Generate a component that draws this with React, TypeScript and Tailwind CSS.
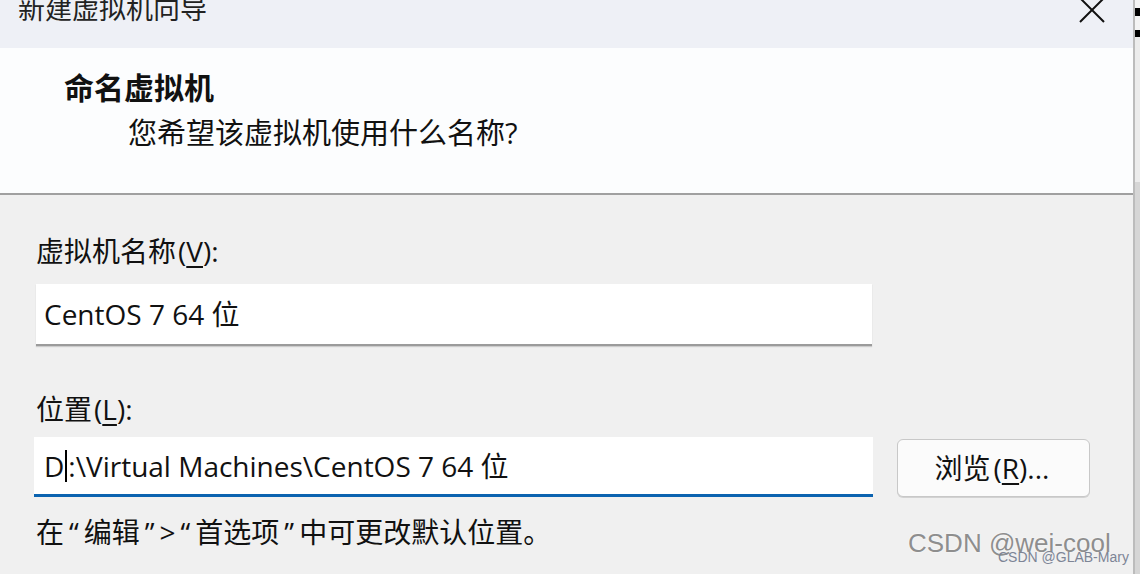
import React from "react";

const cjk = { fontFamily: '"Open Sans", "Noto Sans CJK SC", sans-serif' };
const wm = { fontFamily: '"Liberation Sans", Arial, sans-serif' };

function CloseIcon() {
  return (
    <svg width="26" height="26" viewBox="0 0 26 26" className="block">
      <path d="M1 1 L25 25 M25 1 L1 25" stroke="#111" strokeWidth="2" fill="none" />
    </svg>
  );
}

function Field({ children, focused }: { children: React.ReactNode; focused?: boolean }) {
  return (
    <div
      className={
        focused
          ? "flex h-[60px] w-[839px] items-center border-b-[3px] border-[#0b63b0] bg-white pl-[10px]"
          : "flex h-[62px] w-[836px] items-center border-b-2 border-[#9b9b9b] bg-white pl-[8px] shadow-[0_1px_1px_rgba(0,0,0,0.15)]"
      }
    >
      {children}
    </div>
  );
}

function Q({ c }: { c: string }) {
  return <span className="px-[5px]">{c}</span>;
}

export default function App() {
  return (
    <div className="relative flex h-[574px] w-[1140px] overflow-hidden bg-[#f0f0f0] text-[#111]" style={cjk}>
      <div className="flex w-[1133px] flex-col">
        {/* title bar */}
        <div className="flex h-[48px] items-start justify-between bg-[#eef0f6] pl-[18px] pr-[28px]">
          <span className="-mt-[9px] text-[27px] leading-[36px] text-[#222]">新建虚拟机向导</span>
          <div className="-mt-[3px]">
            <CloseIcon />
          </div>
        </div>

        {/* header */}
        <div className="flex h-[145px] flex-col bg-[#fcfdfe] pl-[64px] pt-[21px]">
          <span className="text-[30px] font-bold leading-[38px]">命名虚拟机</span>
          <span className="ml-[64px] mt-[8px] text-[29px] leading-[36px]">您希望该虚拟机使用什么名称?</span>
        </div>
        <div className="h-[2px] bg-[#a0a0a0]" />

        {/* body */}
        <div className="flex flex-col pl-[36px] pt-[38px]">
          <span className="text-[28px] leading-[36px]">
            虚拟机名称<span className="px-[2px]">(<span className="underline underline-offset-4">V</span>):</span>
          </span>
          <div className="mt-[15px]">
            <Field>
              <span className="text-[28px] leading-[36px]">CentOS 7 64 位</span>
            </Field>
          </div>

          <span className="mt-[45px] text-[28px] leading-[36px]">
            位置<span className="px-[2px]">(<span className="underline underline-offset-4">L</span>):</span>
          </span>
          <div className="-ml-[2px] mt-[10px] flex items-start gap-[24px]">
            <Field focused>
              <span className="flex items-center text-[28px] leading-[36px]">
                D<span className="mx-[1px] inline-block h-[32px] w-[2px] bg-black" />:\Virtual Machines\CentOS 7 64 位
              </span>
            </Field>
            <button className="mt-[2px] flex h-[58px] w-[193px] items-center justify-center rounded-[6px] border border-[#c8c8c8] bg-[#fbfbfb] text-[28px] leading-[36px] text-[#111] shadow-[0_1px_0_rgba(0,0,0,0.12)]">
              浏览<span className="px-[3px]">(<span className="underline underline-offset-4">R</span>)...</span>
            </button>
          </div>

          <span className="mt-[17px] text-[28px] leading-[36px]">
            在<Q c="“" />编辑<Q c="”" />&gt;<Q c="“" />首选项<Q c="”" />中可更改默认位置。
          </span>
        </div>
      </div>

      {/* right edge strip */}
      <div className="flex w-[7px] border-l-2 border-[#bcbcbc]">
        <div className="flex w-full flex-col bg-[#d9d9d9]">
          <div className="h-[8px] bg-[#f4f4f4]" />
          <div className="h-[8px] bg-black" />
          <div className="h-[14px] bg-[#f4f4f4]" />
          <div className="h-[7px] bg-black" />
          <div className="h-[145px] bg-[#ececec]" />
          <div className="flex-1 bg-[#d6d6d6]" />
        </div>
      </div>

      {/* watermarks */}
      <span
        className="absolute left-[908px] top-[526px] whitespace-nowrap text-[26px] leading-[34px] text-[#8e8e8e] [text-shadow:0_0_2px_#fff]"
        style={wm}
      >
        CSDN @wei-cool
      </span>
      <span
        className="absolute left-[998px] top-[548px] whitespace-nowrap text-[14px] leading-[18px] text-[#7d8596]"
        style={wm}
      >
        CSDN @GLAB-Mary
      </span>
    </div>
  );
}
